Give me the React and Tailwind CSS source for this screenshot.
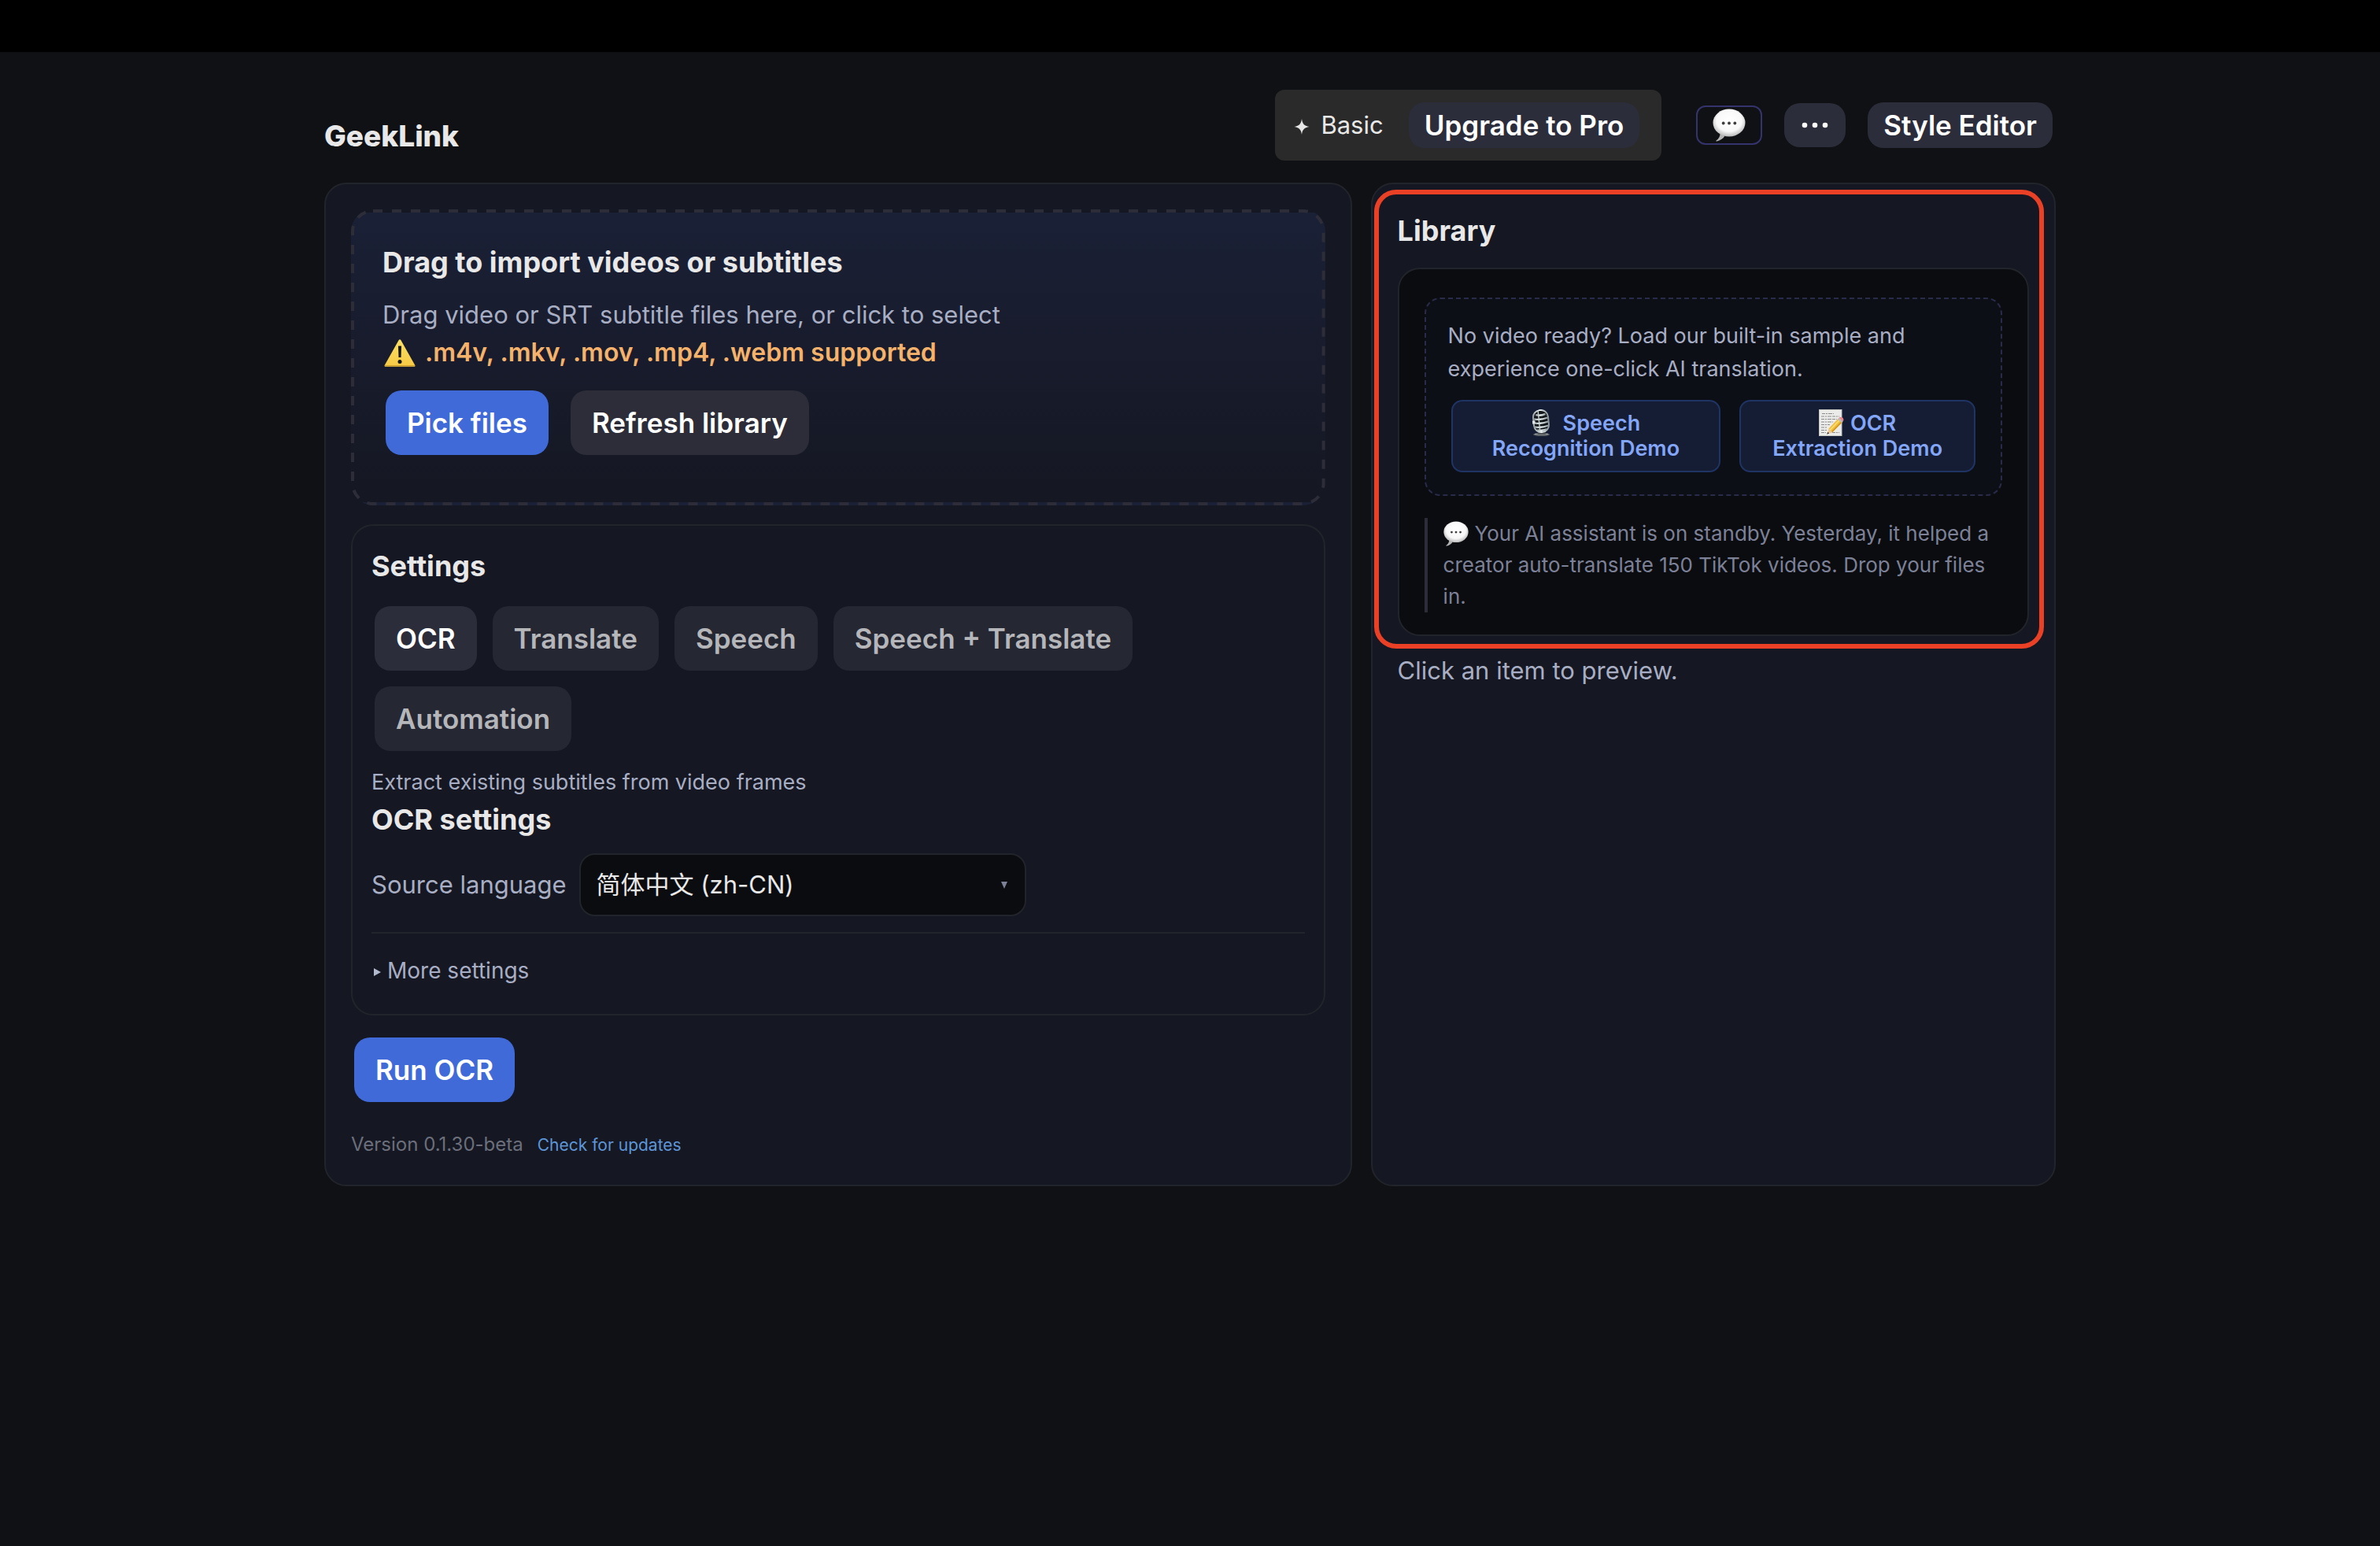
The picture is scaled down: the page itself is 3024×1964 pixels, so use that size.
import React, { useId, useState } from "react";

const ChatBubble = ({ className }) => {
  const id = useId();
  return (
    <svg viewBox="0 0 42 42" className={className} aria-hidden="true">
      <defs>
        <radialGradient id={id} cx="50%" cy="42%" r="58%">
          <stop offset="0%" stopColor="#ffffff" />
          <stop offset="68%" stopColor="#f8f8f8" />
          <stop offset="100%" stopColor="#b9b9b9" />
        </radialGradient>
      </defs>
      <path d="M9.500 31.500c.3 3.600-1.800 6.800-4.800 9 -.6.500-.2 1.200.6 1 4.200-.9 8-3.200 10.200-6.700z" fill="#b4b4b4" />
      <ellipse cx="21" cy="18" rx="20.500" ry="17.500" fill={`url(#${id})`} />
      <circle cx="13.700" cy="18.500" r="1.900" fill="#3c3c3c" />
      <circle cx="21" cy="18.500" r="1.900" fill="#3c3c3c" />
      <circle cx="28.300" cy="18.500" r="1.900" fill="#3c3c3c" />
    </svg>
  );
};

const WarningSign = ({ className }) => {
  const id = useId();
  return (
    <svg viewBox="0 0 40 35" className={className} aria-hidden="true">
      <defs>
        <linearGradient id={id} x1="0" y1="0" x2="0" y2="1">
          <stop offset="0%" stopColor="#fbe066" />
          <stop offset="100%" stopColor="#f6c944" />
        </linearGradient>
      </defs>
      <path
        d="M18.700 1c.6-1 2-1 2.600 0l18 32c.5.900-.1 1.800-1.100 1.800H1.800c-1 0-1.600-.9-1.100-1.800z"
        fill={`url(#${id})`}
      />
      <path d="M1 33.600h38" stroke="#c99a2c" strokeWidth="1" />
      <path d="M18 8.500h4l-.5 14.500h-3z" fill="#161616" />
      <circle cx="20" cy="28.600" r="2.500" fill="#161616" />
    </svg>
  );
};

const Microphone = ({ className }) => {
  const id = useId();
  return (
    <svg viewBox="0 0 24 34" className={className} aria-hidden="true">
      <defs>
        <linearGradient id={id} x1="0" y1="0" x2="1" y2="0">
          <stop offset="0%" stopColor="#9aa3a6" />
          <stop offset="45%" stopColor="#f2fafa" />
          <stop offset="100%" stopColor="#8d979b" />
        </linearGradient>
      </defs>
      <ellipse cx="12.500" cy="32" rx="10.500" ry="2" fill="#5f6468" />
      <path d="M4 31.400h17" stroke="#a3a8aa" strokeWidth="1" />
      <path d="M9 27h8l1 4.500H7.500z" fill="#3d4145" />
      <g transform="rotate(-6 12 15)">
        <rect x="2.500" y="1" width="19" height="28" rx="9" fill="#15181b" stroke={`url(#${id})`} strokeWidth="2" />
        <g stroke={`url(#${id})`} strokeWidth="2.200" fill="none">
          <path d="M6 6.500q6 2 12.500 0" />
          <path d="M3.500 11.500q8 2.500 17.500 0" />
          <path d="M3.500 16.500q8 2.500 17.500 0" />
          <path d="M3.500 21.500q8 2.500 17.500 0" />
          <path d="M6 25.800q6 2 12.500 0" />
        </g>
        <path d="M9.500 1.500v27" stroke="#c9d1d3" strokeWidth="1.400" />
        <path d="M1 15.500h3.500" stroke="#dfe5e6" strokeWidth="4" />
      </g>
    </svg>
  );
};

const Memo = ({ className }) => (
  <svg viewBox="0 0 32 34" className={className} aria-hidden="true">
    <rect x="0.500" y="0.500" width="28.500" height="33" fill="#ebebe9" stroke="#c3c3c0" strokeWidth="1" />
    <g stroke="#8c8c8c" strokeWidth="1" strokeDasharray="4 1 2 1 5 1">
      <path d="M4 5.500h15" />
      <path d="M3 9h23" />
      <path d="M3 12.500h20" />
      <path d="M3 16h15" />
      <path d="M3 19.500h11" />
      <path d="M3 23h8" />
      <path d="M3 26.500h7" />
      <path d="M3 29.500h6" />
      <path d="M17 29.500h9" />
    </g>
    <path d="M12.500 24.500L25 11.500l5 4.700-12.800 13.200z" fill="#f0bb36" />
    <path d="M14.300 26.200L26.800 13.200" stroke="#fbdc72" strokeWidth="1.800" />
    <path d="M16.600 28.700L29.400 15.700" stroke="#c98a1d" strokeWidth="1.200" />
    <path d="M12.500 24.500l4.700 4.900-6.700 2.200z" fill="#e9c99a" />
    <path d="M11.400 28.700l1.700 1.900-2.900 1.200z" fill="#33302c" />
    <path d="M24 12.500l1.600-1.700 5 4.700-1.600 1.700z" fill="#b9bdc1" />
    <path d="M25.600 10.800c1.500-1.300 3.400-1.200 4.700 0 1.300 1.300 1.500 3.200.3 4.700z" fill="#e8868b" />
  </svg>
);

const modes = ["OCR", "Translate", "Speech", "Speech + Translate", "Automation"];

const languages = [
  { value: "zh-CN", label: "简体中文 (zh-CN)" },
  { value: "en-US", label: "English (en-US)" },
];

const buttonBase = "rounded-[20px] px-[27px] py-[14px] text-[35px] leading-[54px] font-semibold cursor-pointer";
const demoButton =
  "rounded-[14px] border-2 border-[#203464] bg-[#141d33] px-8 py-3 text-[27px] leading-8 font-semibold text-[#84a6f9] cursor-pointer";

const TopBar = () => {
  return (
    <header className="flex items-center justify-between pt-12 pb-7">
      <h1 className="self-end text-[37px] leading-[62px] font-extrabold">GeekLink</h1>
      <div className="mr-1 flex items-center gap-7">
        <div className="mr-4 flex h-[90px] items-center rounded-xl bg-[#2a2a2a] pr-7 pl-6">
          <svg viewBox="0 0 20 20" className="mt-1 size-5" aria-hidden="true">
            <path d="M10 0c.8 6 3 9 9.500 10-6.500 1-8.700 4-9.500 10-.8-6-3-9-9.500-10C7 9 9.200 6 10 0z" fill="#e6e6e6" />
          </svg>
          <span className="ml-[14px] text-[31px]">Basic</span>
          <button className="ml-8 h-[58px] rounded-[20px] bg-[#2c2d3a] px-5 text-[35px] font-semibold text-white cursor-pointer">
            Upgrade to Pro
          </button>
        </div>
        <button
          aria-label="Feedback"
          className="flex h-[50px] w-[84px] items-center justify-center rounded-xl border-2 border-[#34336c] cursor-pointer"
        >
          <ChatBubble className="size-[42px]" />
        </button>
        <button
          aria-label="More"
          className="flex h-14 w-[78px] items-center justify-center rounded-[20px] bg-[#2c2d3a] cursor-pointer"
        >
          <svg viewBox="0 0 34 8" className="h-2 w-[34px]" fill="#ffffff" aria-hidden="true">
            <circle cx="4" cy="4" r="3.300" />
            <circle cx="17" cy="4" r="3.300" />
            <circle cx="30" cy="4" r="3.300" />
          </svg>
        </button>
        <button className="h-[58px] rounded-[20px] bg-[#2c2d3a] px-5 text-[35px] font-semibold text-white cursor-pointer">
          Style Editor
        </button>
      </div>
    </header>
  );
};

const DropZone = () => {
  return (
    <section className="relative rounded-[28px] border-4 border-transparent bg-linear-to-b from-[#1a2036] to-[#151722] p-9">
      {/* css dashes are too tight at this width, so the outline is stroked */}
      <svg
        className="pointer-events-none absolute -inset-1 h-[calc(100%+8px)] w-[calc(100%+8px)]"
        aria-hidden="true"
      >
        <rect
          x="2"
          y="2"
          rx="26"
          className="h-[calc(100%-4px)] w-[calc(100%-4px)]"
          fill="none"
          stroke="#2c2d38"
          strokeWidth="4"
          strokeDasharray="12 12"
        />
      </svg>
      <h2 className="text-[36px] leading-[54px] font-bold">Drag to import videos or subtitles</h2>
      <p className="mt-4 text-[31px] leading-[48px] text-[#a8aec3]">
        Drag video or SRT subtitle files here, or click to select
      </p>
      <p className="flex items-center text-[32px] leading-[48px] font-semibold text-[#f5b26b]">
        <WarningSign className="mr-3 ml-[2px] h-[35px] w-10" />
        .m4v, .mkv, .mov, .mp4, .webm supported
      </p>
      <div className="my-5 flex gap-7 p-1">
        <button className={`${buttonBase} bg-[#3f6ad8] text-white`}>Pick files</button>
        <button className={`${buttonBase} bg-[#2c2d38] text-white`}>Refresh library</button>
      </div>
    </section>
  );
};

const SettingsCard = ({ mode, setMode }) => {
  return (
    <section className="mt-6 rounded-[28px] border-2 border-[#22242b] p-6">
      <h2 className="text-[36px] leading-[54px] font-bold">Settings</h2>
      <div className="mt-5 flex flex-wrap gap-5 p-1">
        {modes.map((item) => (
          <button
            key={item}
            onClick={() => setMode(item)}
            className={`${buttonBase} ${
              mode === item ? "bg-[#2c2d3a] text-white" : "bg-[#252733] text-[#b5b6ba]"
            }`}
          >
            {item}
          </button>
        ))}
      </div>
      <p className="mt-4 text-[27px] leading-10 text-[#a8aec3]">Extract existing subtitles from video frames</p>
      <h3 className="text-[36px] leading-[54px] font-bold">OCR settings</h3>
      <div className="mt-4 flex items-center gap-4">
        <label htmlFor="source-language" className="text-[31px] text-[#a8aec3]">
          Source language
        </label>
        <div className="relative w-[568px]">
          <select
            id="source-language"
            className="h-20 w-full appearance-none rounded-[20px] border-2 border-[#22242b] bg-[#0b0c10] pr-12 pl-5 text-[31px] text-[#e8e8e8]"
          >
            {languages.map((lang) => (
              <option key={lang.value} value={lang.value}>
                {lang.label}
              </option>
            ))}
          </select>
          <svg
            viewBox="0 0 8 9"
            className="pointer-events-none absolute top-9 right-6 h-[9px] w-2"
            aria-hidden="true"
          >
            <path d="M0 0h8L4 9z" fill="#7c8197" />
          </svg>
        </div>
      </div>
      <details className="mt-5 border-t-2 border-[#22242b] pt-4">
        <summary className="flex list-none items-center gap-2 py-2 pl-[3px] text-[28px] leading-[46px] text-[#a8aec3] cursor-pointer">
          <svg viewBox="0 0 9 10" className="mt-1 h-[10px] w-[9px]" aria-hidden="true">
            <path d="M0 0l9 5-9 5z" fill="#b4bacd" />
          </svg>
          More settings
        </summary>
      </details>
    </section>
  );
};

const LibraryPanel = () => {
  return (
    <aside className="rounded-[28px] border-2 border-[#22242b] bg-[#151722] p-8">
      <section className="relative">
        <h2 className="text-[36px] leading-[54px] font-bold">Library</h2>
        <div className="mt-5 rounded-[28px] border-2 border-[#22242b] bg-[#0b0c10] px-8 pt-9 pb-7">
          <div className="rounded-[20px] border-2 border-dashed border-[#2a2b48] bg-[#0d0f17] px-7 pt-[26px] pb-6">
            <p className="text-[27px] leading-[42px] text-[#a8aec3]">
              No video ready? Load our built-in sample and experience one-click AI translation.
            </p>
            <div className="mt-[14px] grid grid-cols-[8fr_7fr] gap-6 p-1">
              <button className={demoButton}>
                <Microphone className="-my-1 mr-4 inline-block h-[34px] w-6 align-[-3px]" />
                Speech Recognition Demo
              </button>
              <button className={demoButton}>
                <Memo className="-my-1 mr-2 inline-block h-[34px] w-8 align-[-3px]" />
                OCR Extraction Demo
              </button>
            </div>
          </div>
          <blockquote className="mt-7 border-l-4 border-[#2c2d38] pl-5 text-[26px] leading-10 text-[#7c8197]">
            <ChatBubble className="-my-1 mr-2 inline-block size-8 align-[-3px]" />
            Your AI assistant is on standby. Yesterday, it helped a creator auto-translate 150 TikTok videos. Drop
            your files in.
          </blockquote>
        </div>
        {/* highlight ring around the library */}
        <div className="pointer-events-none absolute -top-[25px] -right-[19px] -bottom-4 -left-[30px] rounded-[28px] border-6 border-[#ea4126]" />
      </section>
      <p className="mt-5 text-[31px] leading-[48px] text-[#a8aec3]">Click an item to preview.</p>
    </aside>
  );
};

const App = () => {
  const [mode, setMode] = useState("OCR");

  return (
    <div className="min-h-screen bg-[#101114] font-[Inter,'Noto_Sans_CJK_SC',sans-serif] text-[#e8e8e8]">
      <div className="h-[66px] bg-black" />
      <div className="mx-auto max-w-[2200px]">
        <TopBar />
        <main className="grid grid-cols-[3fr_2fr] gap-6">
          <div className="rounded-[28px] border-2 border-[#22242b] bg-[#151722] p-8">
            <DropZone />
            <SettingsCard mode={mode} setMode={setMode} />
            <div className="mt-6 p-1">
              <button className={`${buttonBase} bg-[#3f6ad8] text-white`}>Run {mode}</button>
            </div>
            <footer className="mt-8 flex items-baseline gap-[18px] text-[24px] leading-9 text-[#6b6f7c]">
              <span>Version 0.1.30-beta</span>
              <a href="#updates" className="text-[21px] text-[#5d96d8]">
                Check for updates
              </a>
            </footer>
          </div>
          <LibraryPanel />
        </main>
      </div>
    </div>
  );
};

export default App;
